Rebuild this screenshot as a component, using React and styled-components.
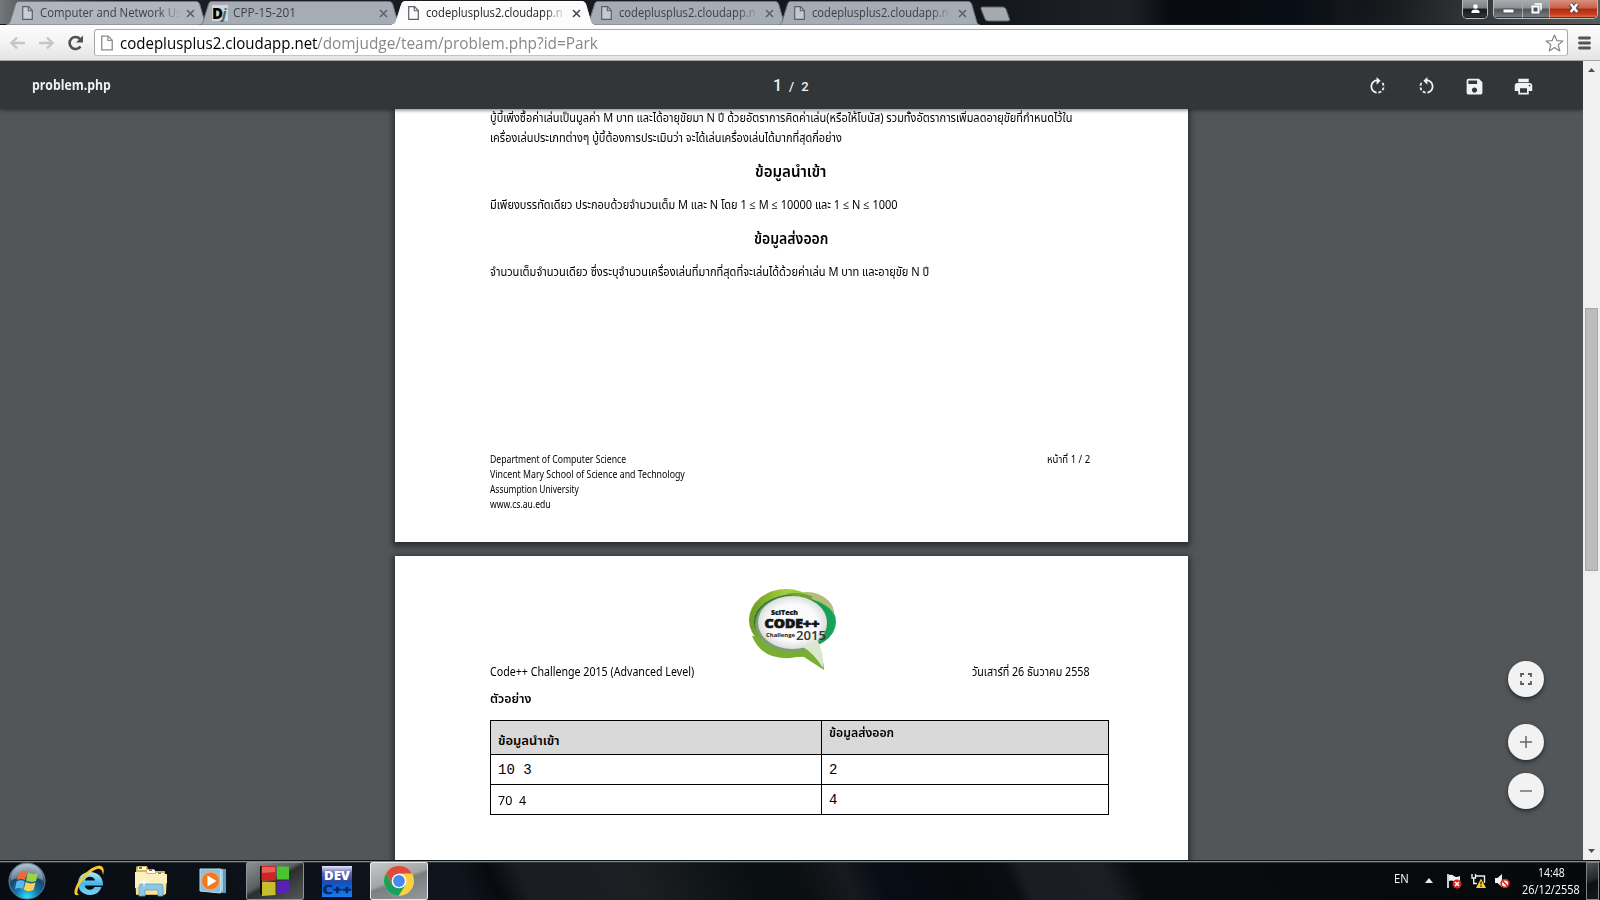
import React, { useLayoutEffect, useRef, useState } from "react";
import styled, { createGlobalStyle } from "styled-components";
import { MdRotateRight, MdRotateLeft, MdSave, MdPrint } from "react-icons/md";

const ui = `"Open Sans", "Noto Sans", sans-serif`;
const doc = `"Noto Sans", "Noto Sans Thai", "Open Sans", sans-serif`;

const Global = createGlobalStyle`
  * { box-sizing: border-box; }
  body { margin: 0; overflow: hidden; }
  svg { display: block; flex: none; }
`;

/* ---------- text that fills a given width ---------- */
const FitBox = styled.span`
  display: inline-block;
  flex: none;
  width: ${(p) => p.$w}px;
  white-space: pre;
`;
const FitInner = styled.span`
  display: inline-block;
  transform-origin: 0 50%;
`;
function Fit({ w, children }) {
  const ref = useRef(null);
  const [scale, setScale] = useState(1);
  useLayoutEffect(() => {
    const n = ref.current.offsetWidth;
    if (n) setScale(w / n);
  }, [w]);
  return (
    <FitBox $w={w}>
      <FitInner ref={ref} style={{ transform: `scaleX(${scale})` }}>{children}</FitInner>
    </FitBox>
  );
}

/* ---------- window ---------- */
const Screen = styled.div`
  width: 1600px;
  height: 900px;
  display: flex;
  flex-direction: column;
  overflow: hidden;
  background: #525659;
  font-family: ${ui};
`;

const TabStrip = styled.div`
  height: 25px;
  flex: none;
  display: flex;
  align-items: flex-start;
  padding: 1px 2px 0 6px;
  border-bottom: 1px solid #15181b;
  background:
    linear-gradient(100deg, transparent 1340px, #3c4042 1480px, #5d6163 1600px),
    linear-gradient(90deg, #74787a 0, #5b5f61 18px, #1b1f24 120px, #14171c 1000px, #1b1f25 1080px, #1d2024 1130px, #080c10 1170px, #090d15 1300px, #14181c 1350px, #0c1013 1400px);
`;
const TabBox = styled.div`
  position: relative;
  z-index: ${(p) => (p.$active ? 3 : 1)};
  width: 202px;
  height: 24px;
  flex: none;
  margin-right: -9px;
  display: flex;
  align-items: center;
  padding-left: 16px;
  color: ${(p) => (p.$active ? "#1c1c1c" : "#3d4045")};
  font-size: 12px;
  line-height: 22px;
`;
const TabShape = styled.svg`
  position: absolute;
  inset: 0;
  z-index: -1;
`;
const TabIcon = styled.div`
  width: 18px;
  height: 17px;
  margin-top: 2px;
  flex: none;
`;
const TabTitle = styled.div`
  width: 141px;
  height: 22px;
  overflow: hidden;
  white-space: nowrap;
  mask-image: ${(p) => (p.$fade ? "linear-gradient(90deg, #000 118px, transparent 141px)" : "none")};
`;
const TabClose = styled.svg`
  margin-left: 5px;
`;
const DjIcon = styled.div`
  width: 16px;
  height: 16px;
  margin: 0 5px 0 -3px;
  flex: none;
  background: #d3d6d8;
  color: #000;
  font: 800 15px/16px "Open Sans", sans-serif;
  letter-spacing: -1px;
  i { color: #47696a; font-weight: 700; }
`;
const NewTab = styled.svg`
  margin: 5px 0 0 9px;
`;
const WindowButtons = styled.div`
  display: flex;
  gap: 5px;
  margin: -1px 0 0 auto;
`;
const ButtonGroup = styled.div`
  display: flex;
  height: 19px;
  border: 1px solid #b9bdc0;
  border-top: 0;
  border-radius: 0 0 5px 5px;
  overflow: hidden;
`;
const WinButton = styled.div`
  width: ${(p) => p.$w}px;
  display: flex;
  align-items: center;
  justify-content: center;
  padding-bottom: 2px;
  border-right: ${(p) => (p.$last ? 0 : "1px solid #a5a9ac")};
  background: ${(p) =>
    p.$close
      ? "linear-gradient(#d98f7f, #c9604a 45%, #b02a10 50%, #c9401f 80%, #e08050)"
      : p.$dark
        ? "linear-gradient(#9a9ea1, #7a7e81 45%, #15181b 50%, #33373a)"
        : "linear-gradient(#a9adb0, #8e9295 45%, #4e5358 50%, #7b8085)"};
  box-shadow: inset 0 -1px 0 rgba(20, 22, 26, 0.7);
`;

/* ---------- browser toolbar ---------- */
const NavBar = styled.div`
  height: 36px;
  flex: none;
  display: flex;
  align-items: center;
  padding: 0 9px 0 9px;
  background: linear-gradient(#fdfdfd, #f3f3f3 50%, #e4e4e4);
  border-bottom: 1px solid #a3a3a3;
`;
const NavIcon = styled.div`
  width: 17px;
  margin-right: ${(p) => p.$gap}px;
  flex: none;
`;
const Omnibox = styled.div`
  flex: 1;
  height: 27px;
  display: flex;
  align-items: center;
  padding: 0 3px 0 6px;
  background: #fff;
  border: 1px solid #a8a8a8;
  border-bottom-color: #c4c4c4;
  border-radius: 3px;
  font-size: 15.5px;
  line-height: 22px;
  color: #85888b;
`;
const Url = styled.div`
  flex: 1;
  display: flex;
  margin-left: 7px;
`;
const Host = styled.span`
  color: #000;
`;
const MenuIcon = styled.svg`
  margin-left: 10px;
`;

/* ---------- pdf viewer ---------- */
const Viewer = styled.div`
  height: 799px;
  flex: none;
  display: flex;
`;
const ViewerMain = styled.div`
  position: relative;
  flex: 1;
  display: flex;
  flex-direction: column;
  overflow: hidden;
  background: #525659;
`;
const PdfBar = styled.div`
  position: relative;
  z-index: 2;
  height: 48px;
  flex: none;
  display: grid;
  grid-template-columns: 1fr auto 1fr;
  align-items: center;
  padding: 2px 49.5px 0 32px;
  background: #323639;
  box-shadow: 0 1px 4px rgba(0, 0, 0, 0.55);
  color: #f1f1f1;
  font: 700 13.5px/20px "Open Sans", sans-serif;
`;
const FileName = styled.div`
  height: 23px;
`;
const PageCount = styled.div`
  display: flex;
  align-items: baseline;
  gap: 7px;
  margin-left: 16px;
  font: 500 13px/20px Roboto, sans-serif;
  strong { font-weight: 500; font-size: 16px; }
`;
const PdfActions = styled.div`
  display: flex;
  justify-content: flex-end;
  gap: 27.5px;
  padding-top: 1px;
  svg { width: 21px; height: 21px; }
`;
const Pages = styled.div`
  flex: 1;
  overflow: hidden;
  display: flex;
  flex-direction: column;
  gap: 14px;
  padding-left: 395px;
`;
const Page = styled.div`
  width: 793px;
  height: ${(p) => p.$h}px;
  flex: none;
  display: flex;
  flex-direction: column;
  padding: 0 98px 0 95px;
  background: #fff;
  box-shadow: 0 2px 6px 2px rgba(0, 0, 0, 0.5);
  color: #000;
  font-family: ${doc};
`;
const Line = styled.div`
  height: 20px;
  flex: none;
  margin-top: ${(p) => p.$top || 0}px;
  font-size: ${(p) => (p.$bold ? 13 : 12)}px;
  line-height: 20px;
  font-weight: ${(p) => (p.$bold ? 600 : 400)};
`;
const Heading = styled.div`
  height: 24px;
  flex: none;
  margin-top: ${(p) => p.$top}px;
  padding-left: 1px;
  text-align: center;
  font-size: 15.5px;
  font-weight: 600;
  line-height: 22px;
`;
const Footer = styled.div`
  display: flex;
  justify-content: space-between;
  margin-top: 170px;
  font-size: 10px;
  line-height: 15px;
`;
const Address = styled.div`
  display: flex;
  flex-direction: column;
`;
const PageHeader = styled.div`
  height: 125px;
  flex: none;
  display: grid;
  grid-template-columns: 1fr auto 1fr;
  align-items: end;
  font-size: 12px;
  line-height: 19px;
`;
const HeaderRight = styled.div`
  text-align: right;
`;
const Logo = styled.svg`
  margin: 0 0 11px 3px;
`;
const Table = styled.div`
  width: 619px;
  flex: none;
  margin: 12px 0 0 0;
  display: grid;
  grid-template-columns: 330px 286px;
  grid-template-rows: 33px 29px 29px;
  gap: 1px;
  padding: 1px;
  background: #000;
`;
const Cell = styled.div`
  padding: ${(p) => p.$top}px 0 0 7px;
  background: ${(p) => (p.$head ? "#d9d9d9" : "#fff")};
  font-family: ${(p) => (p.$mono ? `"Liberation Mono", monospace` : doc)};
  font-size: ${(p) => (p.$mono ? 14 : 13)}px;
  font-weight: ${(p) => (p.$head ? 600 : 400)};
  line-height: 20px;
`;
const Controls = styled.div`
  position: absolute;
  z-index: 3;
  right: 39px;
  top: 600px;
  display: flex;
  flex-direction: column;
`;
const RoundButton = styled.div`
  width: 36px;
  height: 36px;
  margin-bottom: ${(p) => p.$gap}px;
  display: flex;
  align-items: center;
  justify-content: center;
  border-radius: 50%;
  background: #f2f2f2;
  box-shadow: 0 2px 4px rgba(0, 0, 0, 0.55);
`;
const ScrollBar = styled.div`
  width: 17px;
  display: flex;
  flex-direction: column;
  align-items: center;
  background: #f0f0f0;
`;
const ScrollArrow = styled.svg`
  margin-top: ${(p) => p.$top}px;
`;
const Thumb = styled.div`
  width: 13px;
  height: 263px;
  margin-top: 236px;
  background: #bcbcbc;
  border: 1px solid #a8a8a8;
`;

/* ---------- taskbar ---------- */
const TaskBar = styled.div`
  height: 40px;
  flex: none;
  display: flex;
  align-items: center;
  border-top: 1px solid #0e1214;
  box-shadow: inset 0 1px 0 #7c8990, inset 0 2px 0 #2c353a;
  padding-right: 1px;
  background: linear-gradient(66deg,
    #080c12 0, #0d1119 18%, #10151d 29%, #070b0f 31%, #1a1e22 33%, #1b1f22 40%, #0a0f12 47%,
    #0b0f12 50%, #171b1f 53%, #080c16 55%, #070b0e 60%, #0a0e12 63%, #1a1d24 64%, #1b1e23 69%, #080c0f 71%, #05090b 100%);
`;
const TaskItem = styled.div`
  width: ${(p) => p.$w || 58}px;
  height: 38px;
  margin-top: 1px;
  margin-right: ${(p) => p.$gap || 0}px;
  flex: none;
  display: flex;
  align-items: center;
  justify-content: center;
  border: ${(p) => (p.$open ? `1px solid ${p.$open === "front" ? "#e8eaea" : "#8d9294"}` : "0")};
  border-radius: 2px;
  background: ${(p) =>
    p.$open === "front"
      ? "linear-gradient(160deg, #c5c7c8 0, #a3a5a6 45%, #7b7e80 52%, #96999a 100%)"
      : p.$open
        ? "linear-gradient(150deg, #8d9091 0, #5b5f60 42%, #2a2e2f 50%, #55595a 100%)"
        : "none"};
`;
const Tray = styled.div`
  margin-left: auto;
  display: flex;
  align-items: center;
  color: #fff;
  font-size: 12px;
`;
const Lang = styled.div`
  margin: -4px 16px 0 0;
  line-height: 16px;
`;
const TrayIcon = styled.svg`
  margin-right: ${(p) => p.$gap}px;
`;
const Clock = styled.div`
  display: flex;
  flex-direction: column;
  align-items: center;
  margin: 1px 6px 0 0;
  line-height: 17px;
`;
const ShowDesktop = styled.div`
  width: 13px;
  height: 38px;
  margin-top: 1px;
  border: 1px solid #7c8285;
  background: linear-gradient(160deg, #4c5154, #23282b 45%, #0b0f11 55%, #15191b);
`;

function PageGlyph({ w = 11, h = 14, color = "#5c6065" }) {
  return (
    <svg width={w} height={h} viewBox="0 0 11 14">
      <path d="M.7.7H6.5L10.3 4.5V13.3H.7Z" fill="#fff" fillOpacity=".35" stroke={color} strokeWidth="1.2" />
      <path d="M6.3.9V4.7H10.2" fill="none" stroke={color} strokeWidth="1.1" />
    </svg>
  );
}

function Tab({ active, title, width, icon, tint }) {
  return (
    <TabBox $active={active}>
      <TabShape width="202" height="24" viewBox="0 0 202 24">
        <path
          d="M0 24C3 23.500 3.500 22 4.300 20L9.500 3.500C10.200 1.300 11 .5 13 .5H190C192 .5 193 1.300 193.800 3.500L198.500 20C199.200 22.500 200 23.500 202 24Z"
          fill={active ? "#fcfcfc" : tint || "#a6acb5"}
          stroke={active ? "#fff" : "#70767d"}
          strokeWidth="1"
        />
      </TabShape>
      {icon || <TabIcon><PageGlyph /></TabIcon>}
      <TabTitle $fade={width > 100}><Fit w={width}>{title}</Fit></TabTitle>
      <TabClose width="9" height="9" viewBox="0 0 9 9">
        <path d="M1 1L8 8M8 1L1 8" stroke={active ? "#444" : "#5c6065"} strokeWidth="1.5" />
      </TabClose>
    </TabBox>
  );
}

function Orb() {
  return (
    <svg width="38" height="38" viewBox="0 0 38 38">
      <defs>
        <radialGradient id="orb" cx="50%" cy="95%" r="90%">
          <stop offset="0" stopColor="#2ce4ff" /><stop offset=".35" stopColor="#1479ad" />
          <stop offset=".65" stopColor="#1b4668" /><stop offset="1" stopColor="#93a9b8" />
        </radialGradient>
      </defs>
      <circle cx="19" cy="19" r="18" fill="url(#orb)" stroke="#5d7f95" />
      <path d="M3 18A16 16 0 0135 18Q19 12 3 18Z" fill="#fff" opacity=".28" />
      <path d="M11 11Q15 8 19 10L17 18Q13 16 9 18Z" fill="#ef6a32" />
      <path d="M20 10.500Q25 13 30 11L28 19Q23 21 18 18.500Z" fill="#9fd146" />
      <path d="M8.500 19.500Q13 17 16.700 19.500L15 27Q11 25 7 27Z" fill="#5cb7ee" />
      <path d="M17.700 20Q22 22.500 27.500 20.500L25.500 28Q20 30.500 15.800 27.500Z" fill="#fcd34c" />
    </svg>
  );
}
function IeIcon() {
  return (
    <svg width="32" height="32" viewBox="0 0 32 32">
      <defs><linearGradient id="ie" x2="0" y2="1"><stop stopColor="#b5e9fc" /><stop offset=".5" stopColor="#45b7ec" /><stop offset="1" stopColor="#7ad4f6" /></linearGradient></defs>
      <path d="M17 7C9.500 7 5 12 5 18.500S10 30 17 30C22.500 30 27 27 28.500 22H21.500C20.500 24 19 24.700 17 24.700 14 24.700 12 23 11.800 20.500H30C30.500 12 24.500 7 17 7ZM12 15.500C12.600 13 14.400 11.800 17 11.800S21.500 13 22 15.500Z" fill="url(#ie)" />
      <path d="M6 29.500C2 31.500 0 29 2.500 22.500 6 13 17 2 25 .8 30-.2 32 4 30 10 29.500 5 27.500 3 24 4 15 7 5.500 19 4.500 25.500 4 28 4.500 29 6 29.500Z" fill="#fac928" />
    </svg>
  );
}
function FolderIcon() {
  return (
    <svg width="34" height="32" viewBox="0 0 34 32">
      <path d="M2 3Q2 1 4 1H13L14 4H20L21 6H31V30H2Z" fill="#d9b65e" />
      <path d="M4 2H12V5H4ZM13 5H21V8H13ZM22 8H30V11H22Z" fill="#fff" />
      <path d="M5 2H8V4H5Z" fill="#2aa235" /><path d="M15 4.500H18V6H15Z" fill="#d33828" /><path d="M24 7.500H27V9H24Z" fill="#2b8ad1" />
      <path d="M1 7H11L13 9H33L32 29H2Z" fill="#f6e29b" /><path d="M1 7H11L13 9H33V18L1 23Z" fill="#fbefbd" />
      <path d="M5 31V22Q5 19 8 19H27Q29 19 29 22V31H24V25H11V31Z" fill="#8cc8e6" stroke="#58a3c9" strokeWidth=".8" />
      <path d="M10 12L11 16 15 17 11 18 10 22 9 18 5 17 9 16Z" fill="#fff" />
    </svg>
  );
}
function PlayerIcon() {
  return (
    <svg width="28" height="28" viewBox="0 0 28 28">
      <path d="M21 2H27V26H20Z" fill="#5e9cbf" /><path d="M19 2H24.500V25H19Z" fill="#a5d0e4" stroke="#47819f" strokeWidth=".6" />
      <path d="M1 2H21.500V26L1 24Z" fill="#8bbfdb" stroke="#bce0ee" />
      <circle cx="11.500" cy="14" r="9" fill="#f27822" stroke="#f9b47b" strokeWidth=".8" />
      <path d="M8.500 8.500L17.500 14 8.500 19.500Z" fill="#fff" />
    </svg>
  );
}
function BlocksIcon() {
  return (
    <svg width="30" height="32" viewBox="0 0 30 32">
      <path d="M0 1H2V30L0 28Z" fill="#101010" />
      <path d="M1.500 1H16V15.500H1.500Z" fill="#cf2423" /><path d="M2 2H15V7L2 8Z" fill="#e76157" />
      <path d="M17 1.500H29V14.500H17Z" fill="#4ac52f" />
      <path d="M2 17H15.500V30L2 31Z" fill="#c8bd2c" />
      <path d="M17 16L29 15.500V27L17 29.500Z" fill="#5a20b8" />
    </svg>
  );
}
function DevIcon() {
  return (
    <svg width="30" height="31" viewBox="0 0 30 31">
      <defs><linearGradient id="dev" x2="0" y2="1"><stop stopColor="#e8e8ff" /><stop offset=".22" stopColor="#6868b4" /><stop offset=".5" stopColor="#2a4b9f" /><stop offset=".56" stopColor="#0b56c6" /><stop offset="1" stopColor="#1d7bed" /></linearGradient></defs>
      <rect width="30" height="31" fill="url(#dev)" />
      <text x="15" y="13.500" textAnchor="middle" textLength="26" lengthAdjust="spacingAndGlyphs" fontFamily="Open Sans" fontWeight="800" fontSize="12" fill="#fff">DEV</text>
      <text x="15" y="28" textAnchor="middle" textLength="29" lengthAdjust="spacingAndGlyphs" fontFamily="Open Sans" fontWeight="700" fontSize="12" fill="#07275e" stroke="#07275e" strokeWidth=".5">C++</text>
    </svg>
  );
}
function ChromeIcon() {
  return (
    <svg width="30" height="30" viewBox="0 0 30 30">
      <circle cx="15" cy="15" r="15" fill="#fdd042" />
      <path d="M2 7.500A15 15 0 0128 7.500H15L8.500 11.300V18.700Z" fill="#dc4b3e" />
      <path d="M2 7.500A15 15 0 0014.500 30L21.500 18.700 15 22 8.500 18.700Z" fill="#17a05e" />
      <circle cx="15" cy="15" r="7.300" fill="#fff" /><circle cx="15" cy="15" r="5.900" fill="#4a89f3" />
    </svg>
  );
}
function CodeLogo() {
  return (
    <Logo width="90" height="84" viewBox="747 586 90 84">
      <defs>
        <linearGradient id="lime"><stop stopColor="#6c9b24" /><stop offset=".5" stopColor="#a6ce39" /><stop offset="1" stopColor="#8bbd45" /></linearGradient>
        <linearGradient id="ring"><stop stopColor="#256b3b" /><stop offset=".4" stopColor="#2a8152" /><stop offset="1" stopColor="#12a75b" /></linearGradient>
        <radialGradient id="pale"><stop offset=".7" stopColor="#fafafa" /><stop offset="1" stopColor="#dbe0db" /></radialGradient>
      </defs>
      <ellipse cx="807" cy="615" rx="27" ry="23" fill="#b3bc78" />
      <ellipse cx="786" cy="620" rx="37" ry="31" fill="url(#lime)" />
      <path d="M752 636Q762 660 790 658Q802 656 804 657L824 670Q823 650 810 639Z" fill="#7aae31" />
      <ellipse cx="795" cy="622" rx="41" ry="28" fill="url(#ring)" />
      <path d="M786 594Q812 589 834 612Q822 600 799 597Z" fill="#6aa437" />
      <path d="M812 593Q834 598 834 614Q828 604 812 599Z" fill="#b3bc78" />
      <ellipse cx="791" cy="624" rx="36" ry="28" fill="#7c9f70" />
      <path d="M801 646Q813 652 823 668Q824 650 816 638Z" fill="#dbe7cd" />
      <ellipse cx="792.500" cy="622.500" rx="34.500" ry="26.500" fill="url(#pale)" />
      <g fontFamily="Open Sans" fill="#151515">
        <text x="771" y="614.500" fontSize="6" fontWeight="800" textLength="27" lengthAdjust="spacingAndGlyphs" stroke="#151515" strokeWidth=".2">SciTech</text>
        <text x="764.500" y="627.500" fontSize="11.500" fontWeight="800" textLength="55" lengthAdjust="spacingAndGlyphs" stroke="#151515" strokeWidth=".7">CODE++</text>
        <text x="766" y="637" fontSize="6" fontWeight="700" textLength="29" lengthAdjust="spacingAndGlyphs">Challenge</text>
        <text x="796" y="640" fontSize="12" fontWeight="600" fill="#333" textLength="30" lengthAdjust="spacingAndGlyphs">2015</text>
      </g>
    </Logo>
  );
}

export default function App() {
  const host = "codeplusplus2.cloudapp.n";
  return (
    <Screen>
      <Global />
      <TabStrip>
        <Tab title="Computer and Network Us" width={141} tint="#b0b5bf" />
        <Tab title="CPP-15-201" width={63} icon={<DjIcon>D<i>j</i></DjIcon>} />
        <Tab title={host} width={137} active />
        <Tab title={host} width={137} />
        <Tab title={host} width={137} />
        <NewTab width="31" height="16" viewBox="0 0 31 16">
          <path d="M2 1H23Q25 1 26 3L29.500 13Q30 15 28 15H8Q5.500 15 5 13L1 3Q.5 1 2 1Z" fill="#a5aab1" stroke="#5e646a" />
        </NewTab>
        <WindowButtons>
          <ButtonGroup>
            <WinButton $w={24} $last $dark>
              <svg width="11" height="11" viewBox="0 0 11 11"><circle cx="5.500" cy="3.500" r="2.300" fill="#fff" /><path d="M1.500 10V8.500Q2 6.500 5.500 6.500T9.500 8.500V10Z" fill="#fff" /></svg>
            </WinButton>
          </ButtonGroup>
          <ButtonGroup>
            <WinButton $w={29}>
              <svg width="13" height="12" viewBox="0 0 13 12"><rect x="1" y="7" width="11" height="4" fill="#fff" stroke="#4c5360" /></svg>
            </WinButton>
            <WinButton $w={27}>
              <svg width="13" height="13" viewBox="0 0 13 13"><path d="M4.500 2H11V8.500" fill="none" stroke="#fff" strokeWidth="1.500" /><rect x="2.500" y="4.500" width="6" height="6" fill="#4c5360" stroke="#fff" strokeWidth="2" /></svg>
            </WinButton>
            <WinButton $w={47} $last $close>
              <svg width="14" height="12" viewBox="0 0 14 12"><path d="M3.500 2L10.500 10M10.500 2L3.500 10" stroke="#4b4450" strokeWidth="4.500" /><path d="M3.800 2L10.200 10M10.200 2L3.800 10" stroke="#fff" strokeWidth="2.600" /></svg>
            </WinButton>
          </ButtonGroup>
        </WindowButtons>
      </TabStrip>

      <NavBar>
        <NavIcon $gap={12}>
          <svg width="17" height="14" viewBox="0 0 17 14"><path d="M16 7H3M8 1.500L2.500 7 8 12.500" fill="none" stroke="#c5c5c5" strokeWidth="2.400" /></svg>
        </NavIcon>
        <NavIcon $gap={12}>
          <svg width="17" height="14" viewBox="0 0 17 14"><path d="M1 7H14M9 1.500L14.500 7 9 12.500" fill="none" stroke="#c5c5c5" strokeWidth="2.400" /></svg>
        </NavIcon>
        <NavIcon $gap={10}>
          <svg width="17" height="16" viewBox="0 0 17 16"><path d="M13.500 11.500A6 6 0 1113 4" fill="none" stroke="#505050" strokeWidth="2.600" /><path d="M16 .5V7.500H9Z" fill="#505050" /></svg>
        </NavIcon>
        <Omnibox>
          <PageGlyph w={12} h={16} color="#8c8c8c" />
          <Url>
            <Host><Fit w={197}>codeplusplus2.cloudapp.net</Fit></Host>
            <Fit w={281}>/domjudge/team/problem.php?id=Park</Fit>
          </Url>
          <svg width="19" height="18" viewBox="0 0 19 18"><path d="M9.500 1L11.800 6.600 17.900 7 13.200 10.900 14.800 16.900 9.500 13.600 4.200 16.900 5.800 10.900 1.100 7 7.200 6.600Z" fill="#fff" stroke="#858585" strokeWidth="1.200" strokeLinejoin="round" /></svg>
        </Omnibox>
        <MenuIcon width="13" height="14" viewBox="0 0 13 14"><path d="M1.500 2H11.500M1.500 7H11.500M1.500 12H11.500" stroke="#555" strokeWidth="2.800" strokeLinecap="round" /></MenuIcon>
      </NavBar>

      <Viewer>
        <ViewerMain>
          <PdfBar>
            <FileName><Fit w={79}>problem.php</Fit></FileName>
            <PageCount><strong>1</strong><span>/</span><span>2</span></PageCount>
            <PdfActions><MdRotateRight /><MdRotateLeft /><MdSave /><MdPrint /></PdfActions>
          </PdfBar>
          <Pages>
            <Page $h={433}>
              <Line $top={-1}><Fit w={582}>บู้บี้เพิ่งซื้อค่าเล่นเป็นมูลค่า M บาท และได้อายุขัยมา N ปี ด้วยอัตราการคิดค่าเล่น(หรือให้โบนัส) รวมทั้งอัตราการเพิ่มลดอายุขัยที่กำหนดไว้ใน</Fit></Line>
              <Line><Fit w={352}>เครื่องเล่นประเภทต่างๆ บู้บี้ต้องการประเมินว่า จะได้เล่นเครื่องเล่นได้มากที่สุดกี่อย่าง</Fit></Line>
              <Heading $top={12}><Fit w={71}>ข้อมูลนำเข้า</Fit></Heading>
              <Line $top={11}><Fit w={408}>มีเพียงบรรทัดเดียว ประกอบด้วยจำนวนเต็ม M และ N โดย 1 ≤ M ≤ 10000 และ 1 ≤ N ≤ 1000</Fit></Line>
              <Heading $top={12}><Fit w={74}>ข้อมูลส่งออก</Fit></Heading>
              <Line $top={11}><Fit w={439}>จำนวนเต็มจำนวนเดียว ซึ่งระบุจำนวนเครื่องเล่นที่มากที่สุดที่จะเล่นได้ด้วยค่าเล่น M บาท และอายุขัย N ปี</Fit></Line>
              <Footer>
                <Address>
                  <Fit w={136}>Department of Computer Science</Fit>
                  <Fit w={195}>Vincent Mary School of Science and Technology</Fit>
                  <Fit w={89}>Assumption University</Fit>
                  <Fit w={61}>www.cs.au.edu</Fit>
                </Address>
                <Fit w={43}>หน้าที่ 1 / 2</Fit>
              </Footer>
            </Page>
            <Page $h={400}>
              <PageHeader>
                <Fit w={204}>Code++ Challenge 2015 (Advanced Level)</Fit>
                <CodeLogo />
                <HeaderRight><Fit w={118}>วันเสาร์ที่ 26 ธันวาคม 2558</Fit></HeaderRight>
              </PageHeader>
              <Line $top={7} $bold><Fit w={41}>ตัวอย่าง</Fit></Line>
              <Table>
                <Cell $head $top={9}><Fit w={62}>ข้อมูลนำเข้า</Fit></Cell>
                <Cell $head $top={1}><Fit w={65}>ข้อมูลส่งออก</Fit></Cell>
                <Cell $mono $top={5}><Fit w={34}>10 3</Fit></Cell>
                <Cell $mono $top={5}>2</Cell>
                <Cell $top={5}><Fit w={28}>70  4</Fit></Cell>
                <Cell $mono $top={5}>4</Cell>
              </Table>
            </Page>
          </Pages>
          <Controls>
            <RoundButton $gap={27}>
              <svg width="12" height="12" viewBox="0 0 12 12"><path d="M1 4V1H4M8 1H11V4M11 8V11H8M4 11H1V8" fill="none" stroke="#5f5f5f" strokeWidth="1.800" /></svg>
            </RoundButton>
            <RoundButton $gap={13}>
              <svg width="12" height="12" viewBox="0 0 12 12"><path d="M6 0V12M0 6H12" stroke="#666" strokeWidth="1.500" /></svg>
            </RoundButton>
            <RoundButton $gap={0}>
              <svg width="12" height="12" viewBox="0 0 12 12"><path d="M0 6H12" stroke="#777" strokeWidth="1.600" /></svg>
            </RoundButton>
          </Controls>
        </ViewerMain>
        <ScrollBar>
          <ScrollArrow $top={7} width="7" height="4" viewBox="0 0 7 4"><path d="M3.500 0L7 4H0Z" fill="#505050" /></ScrollArrow>
          <Thumb />
          <ScrollArrow $top={278} width="7" height="4" viewBox="0 0 7 4"><path d="M0 0H7L3.500 4Z" fill="#505050" /></ScrollArrow>
        </ScrollBar>
      </Viewer>

      <TaskBar>
        <TaskItem $w={54} $gap={6}><Orb /></TaskItem>
        <TaskItem $gap={4}><IeIcon /></TaskItem>
        <TaskItem $gap={3}><FolderIcon /></TaskItem>
        <TaskItem $gap={4} $w={59}><PlayerIcon /></TaskItem>
        <TaskItem $open="back" $gap={4}><BlocksIcon /></TaskItem>
        <TaskItem $gap={4}><DevIcon /></TaskItem>
        <TaskItem $open="front"><ChromeIcon /></TaskItem>
        <Tray>
          <Lang><Fit w={15}>EN</Fit></Lang>
          <TrayIcon $gap={14} width="8" height="5" viewBox="0 0 8 5"><path d="M4 0L8 5H0Z" fill="#e9e9e9" /></TrayIcon>
          <TrayIcon $gap={9} width="15" height="16" viewBox="0 0 15 16">
            <path d="M1 1V15" stroke="#fff" strokeWidth="1.600" /><path d="M2 2Q5 1 7 3T13 3V9Q9 10 7 8.500T2 8Z" fill="#f2f2f2" />
            <circle cx="10" cy="11" r="4.500" fill="#d9261c" /><path d="M8 9L12 13M12 9L8 13" stroke="#fff" strokeWidth="1.500" />
          </TrayIcon>
          <TrayIcon $gap={9} width="15" height="16" viewBox="0 0 15 16">
            <path d="M1 1V5H4.500V1M2.700 5V10.500H6M5 3H13.500V10" fill="none" stroke="#eee" strokeWidth="1.400" />
            <path d="M10 5.500L15 15H5Z" fill="#f9d22a" /><path d="M10 8.500V11.500M10 12.500V14" stroke="#222" strokeWidth="1.300" />
          </TrayIcon>
          <TrayIcon $gap={12} width="15" height="16" viewBox="0 0 15 16">
            <path d="M0 5H2.500L7 1V14L2.500 10H0Z" fill="#f2f2f2" />
            <circle cx="10" cy="10.500" r="3.900" fill="#fff" stroke="#d9261c" strokeWidth="1.700" /><path d="M7.500 8L12.500 13" stroke="#d9261c" strokeWidth="1.700" />
          </TrayIcon>
          <Clock><Fit w={27}>14:48</Fit><Fit w={58}>26/12/2558</Fit></Clock>
          <ShowDesktop />
        </Tray>
      </TaskBar>
    </Screen>
  );
}
